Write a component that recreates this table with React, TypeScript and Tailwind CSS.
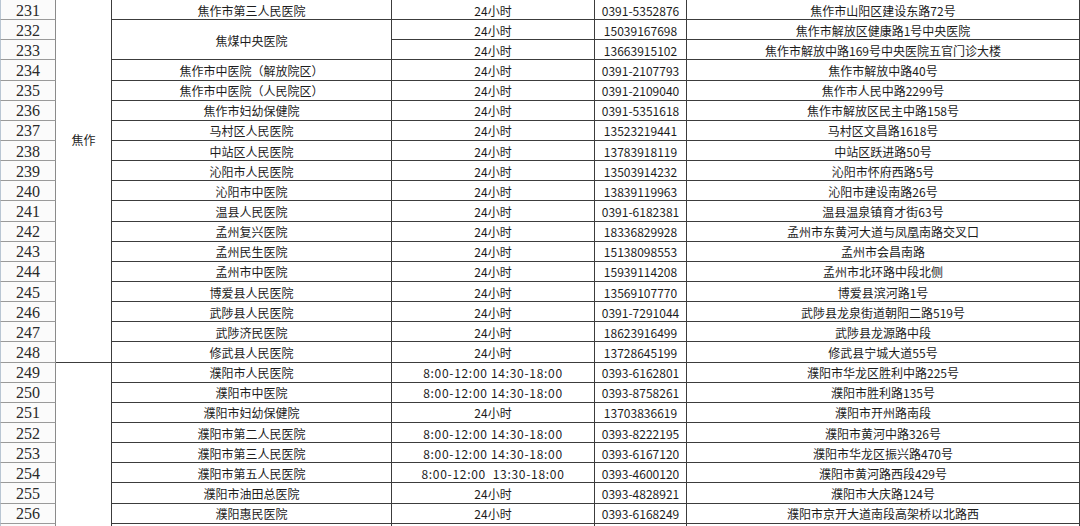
import React from "react";

type Row = {
  no: number;
  hospital?: string;
  hospitalSpan?: number;
  hours: string;
  phone: string;
  address: string;
};

const DAY = "24小时";
const SHIFT = "8:00-12:00 14:30-18:00";

const rows: Row[] = [
  { no: 231, hospital: "焦作市第三人民医院", hours: DAY, phone: "0391-5352876", address: "焦作市山阳区建设东路72号" },
  { no: 232, hospital: "焦煤中央医院", hospitalSpan: 2, hours: DAY, phone: "15039167698", address: "焦作市解放区健康路1号中央医院" },
  { no: 233, hours: DAY, phone: "13663915102", address: "焦作市解放中路169号中央医院五官门诊大楼" },
  { no: 234, hospital: "焦作市中医院（解放院区）", hours: DAY, phone: "0391-2107793", address: "焦作市解放中路40号" },
  { no: 235, hospital: "焦作市中医院（人民院区）", hours: DAY, phone: "0391-2109040", address: "焦作市人民中路2299号" },
  { no: 236, hospital: "焦作市妇幼保健院", hours: DAY, phone: "0391-5351618", address: "焦作市解放区民主中路158号" },
  { no: 237, hospital: "马村区人民医院", hours: DAY, phone: "13523219441", address: "马村区文昌路1618号" },
  { no: 238, hospital: "中站区人民医院", hours: DAY, phone: "13783918119", address: "中站区跃进路50号" },
  { no: 239, hospital: "沁阳市人民医院", hours: DAY, phone: "13503914232", address: "沁阳市怀府西路5号" },
  { no: 240, hospital: "沁阳市中医院", hours: DAY, phone: "13839119963", address: "沁阳市建设南路26号" },
  { no: 241, hospital: "温县人民医院", hours: DAY, phone: "0391-6182381", address: "温县温泉镇育才街63号" },
  { no: 242, hospital: "孟州复兴医院", hours: DAY, phone: "18336829928", address: "孟州市东黄河大道与凤凰南路交叉口" },
  { no: 243, hospital: "孟州民生医院", hours: DAY, phone: "15138098553", address: "孟州市会昌南路" },
  { no: 244, hospital: "孟州市中医院", hours: DAY, phone: "15939114208", address: "孟州市北环路中段北侧" },
  { no: 245, hospital: "博爱县人民医院", hours: DAY, phone: "13569107770", address: "博爱县滨河路1号" },
  { no: 246, hospital: "武陟县人民医院", hours: DAY, phone: "0391-7291044", address: "武陟县龙泉街道朝阳二路519号" },
  { no: 247, hospital: "武陟济民医院", hours: DAY, phone: "18623916499", address: "武陟县龙源路中段" },
  { no: 248, hospital: "修武县人民医院", hours: DAY, phone: "13728645199", address: "修武县宁城大道55号" },
  { no: 249, hospital: "濮阳市人民医院", hours: SHIFT, phone: "0393-6162801", address: "濮阳市华龙区胜利中路225号" },
  { no: 250, hospital: "濮阳市中医院", hours: SHIFT, phone: "0393-8758261", address: "濮阳市胜利路135号" },
  { no: 251, hospital: "濮阳市妇幼保健院", hours: DAY, phone: "13703836619", address: "濮阳市开州路南段" },
  { no: 252, hospital: "濮阳市第二人民医院", hours: SHIFT, phone: "0393-8222195", address: "濮阳市黄河中路326号" },
  { no: 253, hospital: "濮阳市第三人民医院", hours: SHIFT, phone: "0393-6167120", address: "濮阳市华龙区振兴路470号" },
  { no: 254, hospital: "濮阳市第五人民医院", hours: "8:00-12:00\u00a0\u00a013:30-18:00", phone: "0393-4600120", address: "濮阳市黄河路西段429号" },
  { no: 255, hospital: "濮阳市油田总医院", hours: DAY, phone: "0393-4828921", address: "濮阳市大庆路124号" },
  { no: 256, hospital: "濮阳惠民医院", hours: DAY, phone: "0393-6168249", address: "濮阳市京开大道南段高架桥以北路西" },
];

const cell = "border-r border-b border-[#3c3c3c] text-center align-middle whitespace-nowrap p-0 pt-[2px]";

export default function App() {
  return (
    <div className="h-[526px] w-[1080px] overflow-hidden bg-white text-[12px] leading-4 text-[#1c1c1c] [font-family:'Noto_Sans_CJK_SC',sans-serif]">
      <table className="w-[1080px] table-fixed border-separate border-spacing-0">
        <colgroup>
          <col className="w-[56px]" />
          <col className="w-[56px]" />
          <col className="w-[280px]" />
          <col className="w-[203px]" />
          <col className="w-[92px]" />
          <col className="w-[393px]" />
        </colgroup>
        <tbody>
          {rows.map((r) => (
            <tr key={r.no} className="h-[20.15px]">
              <td className="h-[20.15px] border-b border-l border-r border-l-[#b9c6d3] border-b-[#9a9a9a] border-r-[#8a8a8a] bg-[#fbfbfb] p-0 pt-[2px] text-center align-middle text-[16px] leading-4 text-[#2a2a2a] [font-family:'Liberation_Serif',serif]">
                {r.no}
              </td>
              {r.no === 231 && (
                <td rowSpan={18} className="border-r border-b border-[#3c3c3c] p-0 pt-[132px] text-center align-top">
                  焦作
                </td>
              )}
              {r.no === 249 && (
                <td rowSpan={9} className="border-r border-[#3c3c3c] p-0 text-center align-top" />
              )}
              {r.hospital !== undefined && (
                <td rowSpan={r.hospitalSpan ?? 1} className={cell}>
                  {r.hospital}
                </td>
              )}
              <td className={r.hours === DAY ? cell : cell + " tracking-[0.7px]"}>{r.hours}</td>
              <td className={cell}>{r.phone}</td>
              <td className={cell}>{r.address}</td>
            </tr>
          ))}
          <tr className="h-[20.15px]">
            <td className="border-l border-r border-l-[#b9c6d3] border-r-[#8a8a8a] bg-[#fbfbfb] p-0" />
            <td className="border-r border-[#3c3c3c] p-0" />
            <td className="border-r border-[#3c3c3c] p-0" />
            <td className="border-r border-[#3c3c3c] p-0" />
            <td className="border-r border-[#3c3c3c] p-0" />
          </tr>
        </tbody>
      </table>
    </div>
  );
}
